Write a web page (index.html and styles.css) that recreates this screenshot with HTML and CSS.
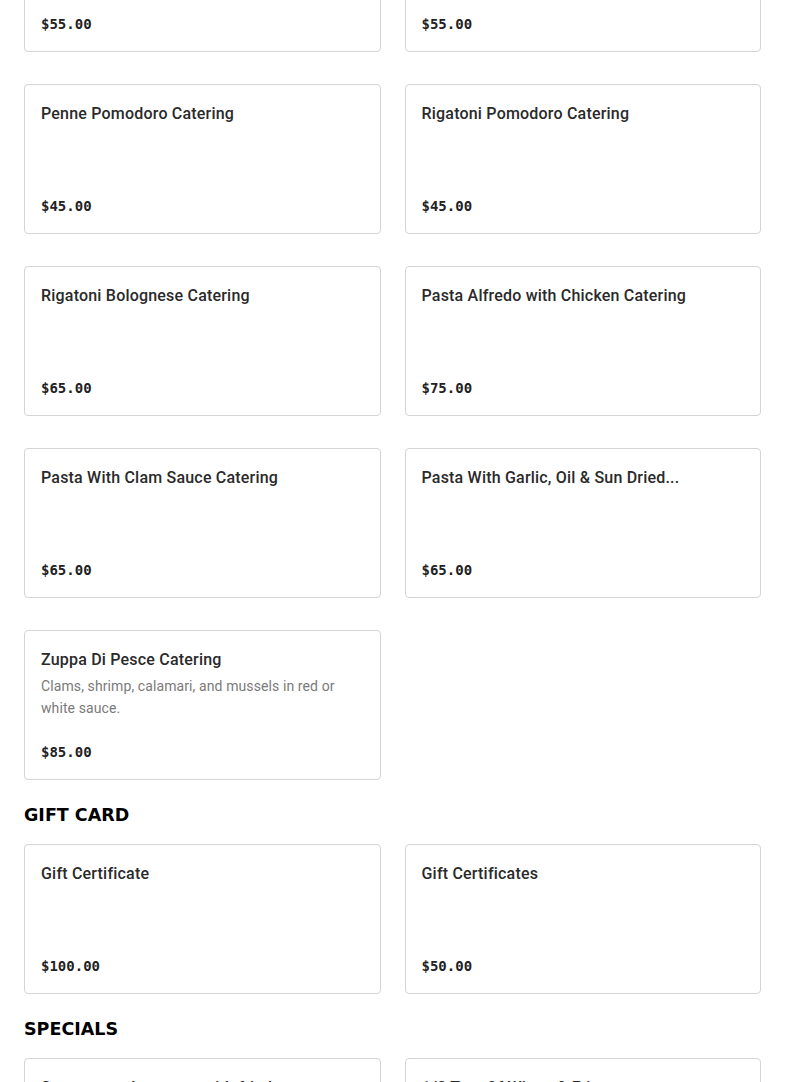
FILE: index.html
```html
<!DOCTYPE html>
<html lang="en">
<head>
  <meta charset="UTF-8" />
  <meta name="viewport" content="width=device-width, initial-scale=1.0"/>
  <title>Menu</title>
  <link rel="stylesheet" href="styles.css">
</head>
<body>
  <div class="menu">
    <div class="menu-grid first">
      <div class="item">
        <div class="item-name">Baked Ziti Catering</div>
        <div class="item-price">$55.00</div>
      </div>
      <div class="item">
        <div class="item-name">Penne Vodka Catering</div>
        <div class="item-price">$55.00</div>
      </div>
      <div class="item">
        <div class="item-name">Penne Pomodoro Catering</div>
        <div class="item-price">$45.00</div>
      </div>
      <div class="item">
        <div class="item-name">Rigatoni Pomodoro Catering</div>
        <div class="item-price">$45.00</div>
      </div>
      <div class="item">
        <div class="item-name">Rigatoni Bolognese Catering</div>
        <div class="item-price">$65.00</div>
      </div>
      <div class="item">
        <div class="item-name">Pasta Alfredo with Chicken Catering</div>
        <div class="item-price">$75.00</div>
      </div>
      <div class="item">
        <div class="item-name">Pasta With Clam Sauce Catering</div>
        <div class="item-price">$65.00</div>
      </div>
      <div class="item">
        <div class="item-name">Pasta With Garlic, Oil &amp; Sun Dried...</div>
        <div class="item-price">$65.00</div>
      </div>
      <div class="item">
        <div class="item-name">Zuppa Di Pesce Catering</div>
        <p class="item-desc">Clams, shrimp, calamari, and mussels in red or white sauce.</p>
        <div class="item-price">$85.00</div>
      </div>
    </div>

    <h2 class="section-title">Gift Card</h2>
    <div class="menu-grid">
      <div class="item">
        <div class="item-name">Gift Certificate</div>
        <div class="item-price">$100.00</div>
      </div>
      <div class="item">
        <div class="item-name">Gift Certificates</div>
        <div class="item-price">$50.00</div>
      </div>
    </div>

    <h2 class="section-title">Specials</h2>
    <div class="menu-grid">
      <div class="item">
        <div class="item-name">Sausage and peppers with fried potatoes and...</div>
        <div class="item-price">$18.00</div>
      </div>
      <div class="item">
        <div class="item-name">1/2 Tray Of Wings &amp; Fries</div>
        <div class="item-price">$45.00</div>
      </div>
    </div>
  </div>
</body>
</html>
```

FILE: styles.css
```css
body {
  margin: 0;
  padding: 0;
  background-color: #FFFFFF;
  font-family: 'Roboto', 'Inter', sans-serif;
  color: #2A2A2A;
}
.menu {
  padding: 0 24px 40px;
}
.menu-grid {
  display: grid;
  grid-template-columns: 1fr 1fr;
  column-gap: 24px;
  row-gap: 32px;
}
.menu-grid.first {
  margin-top: -98px;
}
.item {
  display: flex;
  flex-direction: column;
  min-height: 150px;
  box-sizing: border-box;
  padding: 16px;
  border: 1px solid #D4D4D4;
  border-radius: 4px;
  background-color: #FFFFFF;
}
.item-name {
  margin-top: 1px;
  font-size: 16px;
  line-height: 24px;
  font-weight: 500;
  letter-spacing: 0.2px;
  color: #2A2A2A;
}
.item-desc {
  margin: 3px 0 0;
  font-size: 14px;
  line-height: 22px;
  letter-spacing: 0.1px;
  color: #7A7A7A;
}
.item-price {
  margin-top: auto;
  margin-bottom: 1px;
  font-family: 'DejaVu Sans Mono', 'Liberation Mono', monospace;
  font-size: 14px;
  line-height: 20px;
  font-weight: 700;
  color: #222222;
}
.section-title {
  margin: 24px 0 18px;
  font-family: 'DejaVu Sans', 'Lato', sans-serif;
  font-weight: 700;
  font-size: 17.5px;
  line-height: 22px;
  text-transform: uppercase;
  color: #000000;
}
```
